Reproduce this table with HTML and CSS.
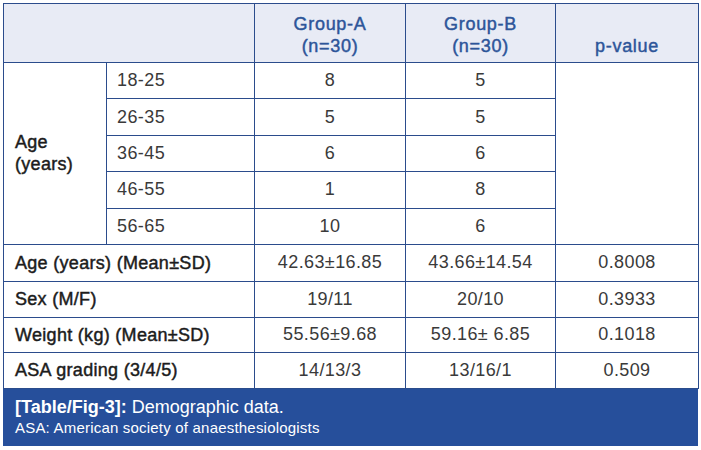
FILE: index.html
```html
<!DOCTYPE html>
<html>
<head>
<meta charset="utf-8">
<link rel="stylesheet" href="styles.css">
</head>
<body>
<div class="figure">
  <table class="data">
    <colgroup>
      <col class="c1"><col class="c2"><col class="c3"><col class="c4"><col class="c5">
    </colgroup>
    <thead>
      <tr class="head">
        <th colspan="2"></th>
        <th>Group-A<br>(n=30)</th>
        <th>Group-B<br>(n=30)</th>
        <th>p-value</th>
      </tr>
    </thead>
    <tbody>
      <tr class="r1">
        <td rowspan="5" class="label">Age<br>(years)</td>
        <td class="range">18-25</td>
        <td class="num">8</td>
        <td class="num">5</td>
        <td rowspan="5" class="num"></td>
      </tr>
      <tr class="r2"><td class="range">26-35</td><td class="num">5</td><td class="num">5</td></tr>
      <tr class="r3"><td class="range">36-45</td><td class="num">6</td><td class="num">6</td></tr>
      <tr class="r4"><td class="range">46-55</td><td class="num">1</td><td class="num">8</td></tr>
      <tr class="r5"><td class="range">56-65</td><td class="num">10</td><td class="num">6</td></tr>
      <tr class="r6"><td colspan="2" class="label">Age (years) (Mean±SD)</td><td class="num">42.63±16.85</td><td class="num">43.66±14.54</td><td class="num">0.8008</td></tr>
      <tr class="r7"><td colspan="2" class="label">Sex (M/F)</td><td class="num">19/11</td><td class="num">20/10</td><td class="num">0.3933</td></tr>
      <tr class="r8"><td colspan="2" class="label">Weight (kg) (Mean±SD)</td><td class="num">55.56±9.68</td><td class="num">59.16± 6.85</td><td class="num">0.1018</td></tr>
      <tr class="r9"><td colspan="2" class="label">ASA grading (3/4/5)</td><td class="num">14/13/3</td><td class="num">13/16/1</td><td class="num">0.509</td></tr>
    </tbody>
  </table>
  <div class="caption">
    <p class="cap-title"><b>[Table/Fig-3]:</b> Demographic data.</p>
    <p class="cap-note">ASA: American society of anaesthesiologists</p>
  </div>
</div>
</body>
</html>
```

FILE: styles.css
```css
html, body {
  margin: 0;
  padding: 0;
  background: #ffffff;
}

body {
  font-family: "Liberation Sans", Arial, sans-serif;
}

.figure {
  width: 695px;
  margin: 3px 0 0 3px;
}

.data {
  width: 695px;
  border-collapse: collapse;
  table-layout: fixed;
  font-size: 18px;
}

.c1 { width: 103px; }
.c2 { width: 148px; }
.c3 { width: 151px; }
.c4 { width: 150px; }
.c5 { width: 143px; }

.data th,
.data td {
  border: 1px solid #2b4c8c;
  padding: 0;
}

.head {
  height: 59px;
  background: #e8ebf5;
}

.head th {
  color: #2d5599;
  font-weight: normal;
  -webkit-text-stroke: 0.45px #2d5599;
  letter-spacing: 0.7px;
  line-height: 22px;
  vertical-align: bottom;
  padding-bottom: 5px;
  text-align: center;
}

.r1, .r2, .r3, .r4, .r5 { height: 36.4px; }
.r6 { height: 37px; }
.r7 { height: 36px; }
.r8 { height: 35px; }
.r9 { height: 36px; }

.label {
  color: #1c1c1c;
  font-weight: normal;
  -webkit-text-stroke: 0.45px #1c1c1c;
  letter-spacing: 0.3px;
  text-align: left;
  padding-left: 11px !important;
  line-height: 22px;
  vertical-align: middle;
}

.range {
  color: #3a3a3a;
  text-align: left;
  padding-left: 10px !important;
  letter-spacing: 0.4px;
}

.num {
  color: #3a3a3a;
  text-align: center;
  letter-spacing: 0.4px;
}

.caption {
  background: #264f9b;
  height: 57px;
  box-sizing: border-box;
  padding: 7px 0 0 12px;
  color: #ffffff;
}

.caption p {
  margin: 0;
}

.cap-title {
  font-size: 18px;
  line-height: 22px;
}

.cap-note {
  font-size: 15px;
  line-height: 19px;
  letter-spacing: 0.2px;
}
```
